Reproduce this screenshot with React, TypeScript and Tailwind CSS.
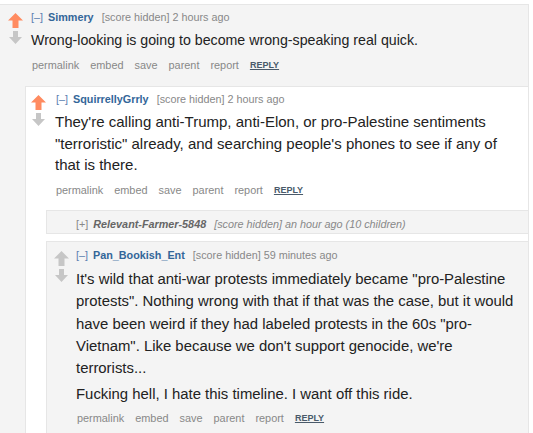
import React from "react";

type Vote = "up" | "none";

const UpArrow: React.FC<{ on?: boolean }> = ({ on }) => (
  <svg width="15" height="15" viewBox="0 0 15 15" className="block">
    <path d="M7.5 0 L15 7.5 H10.5 V15 H4.5 V7.5 H0 Z" fill={on ? "#ff8b60" : "#c6c6c6"} />
  </svg>
);

const DownArrow: React.FC = () => (
  <svg width="13" height="13" viewBox="0 0 13 13" className="block">
    <path d="M4 0 H9 V6 H13 L6.5 13 L0 6 H4 Z" fill="#c6c6c6" />
  </svg>
);

const Buttons: React.FC = () => (
  <div className="flex items-center gap-[11px] text-[10.9px] leading-[14px] text-[#888]">
    <span>permalink</span>
    <span>embed</span>
    <span>save</span>
    <span>parent</span>
    <span>report</span>
    <span className="font-bold underline text-[#4a5a6a] text-[9px]">REPLY</span>
  </div>
);

const Tagline: React.FC<{ author: string; age: string }> = ({ author, age }) => (
  <div className="flex items-center text-[10.8px] leading-[16px] text-[#888] whitespace-nowrap">
    <span className="text-[#5b7eb0]">[–]</span>
    <span className="ml-[5px] font-bold text-[#336699]">{author}</span>
    <span className="ml-[8px]">[score hidden] {age}</span>
  </div>
);

export default function App() {
  const vote: Vote = "up";
  return (
    <div className="w-[533px] h-[433px] overflow-hidden bg-white font-['Liberation_Sans',Arial,sans-serif] pt-[4px]">
      {/* top level comment */}
      <div className="w-[529px] bg-[#f4f4f4] border-t border-r border-[#e6e6e6] min-h-[440px]">
        <div className="flex">
          <div className="w-[31px] pl-[8px] pt-[8px] flex flex-col items-start gap-[3px]">
            <UpArrow on={vote === "up"} />
            <div className="pl-[1px]">
              <DownArrow />
            </div>
          </div>
          <div className="flex-1 pt-[4px]">
            <Tagline author="Simmery" age="2 hours ago" />
            <p className="mt-[4px] text-[14.2px] leading-[23px] text-[#222]">
              Wrong-looking is going to become wrong-speaking real quick.
            </p>
            <div className="mt-[6px] pl-[1px]">
              <Buttons />
            </div>
          </div>
        </div>

        {/* child */}
        <div className="ml-[25px] mt-[14px] bg-white border-t border-l border-[#e6e6e6] min-h-[360px]">
          <div className="flex">
            <div className="w-[29px] pl-[5px] pt-[8px] flex flex-col items-start gap-[3px]">
              <UpArrow on />
              <div className="pl-[1px]">
                <DownArrow />
              </div>
            </div>
            <div className="flex-1 pt-[4px] pr-[20px]">
              <div className="pl-[1px]">
                <Tagline author="SquirrellyGrrly" age="2 hours ago" />
              </div>
              <p className="mt-[4px] text-[15px] leading-[21.7px] text-[#222]">
                They're calling anti-Trump, anti-Elon, or pro-Palestine sentiments "terroristic" already, and searching
                people's phones to see if any of that is there.
              </p>
              <div className="mt-[7px] pl-[1px]">
                <Buttons />
              </div>
            </div>
          </div>

          {/* collapsed */}
          <div className="ml-[20px] mt-[13px] bg-[#f4f4f4] border-t border-b border-l border-[#e6e6e6] h-[24px] pt-[6px] pl-[29px] text-[10.8px] leading-[14px] italic text-[#888] whitespace-nowrap">
            <span className="not-italic">[+]</span>
            <span className="ml-[5px] font-bold text-[#666]">Relevant-Farmer-5848</span>
            <span className="ml-[8px]">[score hidden] an hour ago (10 children)</span>
          </div>

          {/* nested child */}
          <div className="ml-[20px] mt-[7px] bg-[#f4f4f4] border-t border-l border-[#e6e6e6] min-h-[200px]">
            <div className="flex">
              <div className="w-[29px] pl-[7px] pt-[9px] flex flex-col items-start gap-[3px]">
                <UpArrow />
                <div className="pl-[1px]">
                  <DownArrow />
                </div>
              </div>
              <div className="flex-1 pt-[5px] pr-[3px]">
                <Tagline author="Pan_Bookish_Ent" age="59 minutes ago" />
                <p className="mt-[5px] text-[14.9px] leading-[22.3px] text-[#222]">
                  It's wild that anti-war protests immediately became "pro-Palestine protests". Nothing wrong with that if
                  that was the case, but it would have been weird if they had labeled protests in the 60s "pro-Vietnam".
                  Like because we don't support genocide, we're terrorists...
                </p>
                <p className="mt-[3px] text-[14.9px] leading-[22.3px] text-[#222]">
                  Fucking hell, I hate this timeline. I want off this ride.
                </p>
                <div className="mt-[6px] pl-[1px]">
                  <Buttons />
                </div>
              </div>
            </div>
          </div>
        </div>
      </div>
    </div>
  );
}
